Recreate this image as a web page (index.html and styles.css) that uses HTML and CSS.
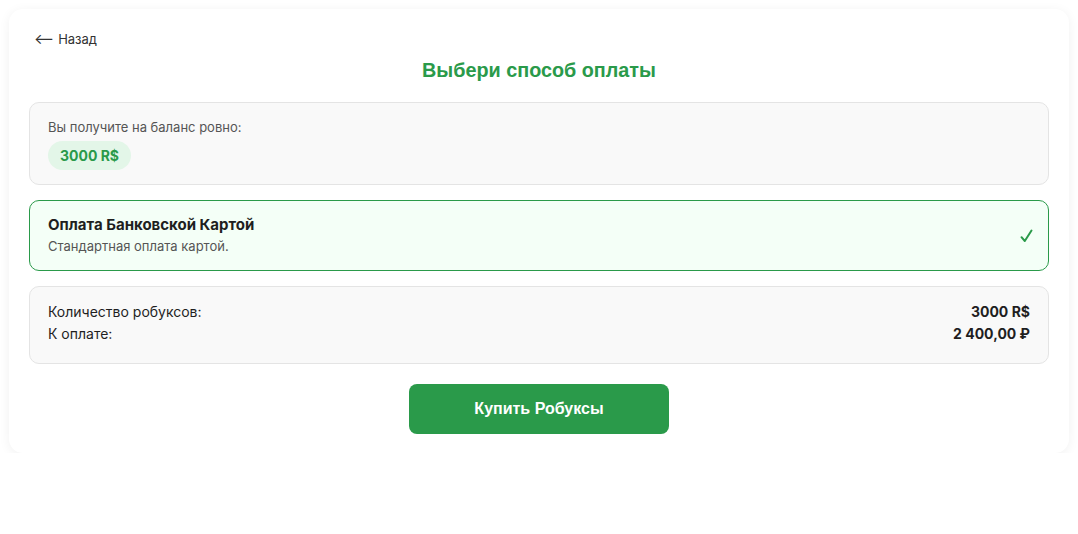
FILE: index.html
```html
<!DOCTYPE html>
<html lang="ru">
<head>
<meta charset="utf-8">
<title>Выбери способ оплаты</title>
<link rel="stylesheet" href="styles.css">
</head>
<body>
<div class="card">
  <a class="back" href="#"><span class="arrow">⟵</span> Назад</a>
  <h1 class="title">Выбери способ оплаты</h1>
  <div class="box info">
    <div class="info-label">Вы получите на баланс ровно:</div>
    <span class="pill">3000 R$</span>
  </div>
  <div class="box method">
    <div class="method-text">
      <div class="method-name">Оплата Банковской Картой</div>
      <div class="method-desc">Стандартная оплата картой.</div>
    </div>
    <svg class="check" width="13" height="14" viewBox="0 0 13 14" aria-hidden="true">
      <path d="M1.5 8.2 L4.8 12 L11.5 1.5" fill="none" stroke="#2a9a4a" stroke-width="2" stroke-linecap="round" stroke-linejoin="round"/>
    </svg>
  </div>
  <div class="box summary">
    <div class="row"><span>Количество робуксов:</span><b>3000 R$</b></div>
    <div class="row"><span>К оплате:</span><b>2 400,00 ₽</b></div>
  </div>
  <div class="actions">
    <button class="buy">Купить Робуксы</button>
  </div>
</div>
</body>
</html>
```
FILE: styles.css
```css
html, body { margin: 0; padding: 0; background: #fff; }
body {
  font-family: Inter, "Noto Sans", sans-serif;
  color: #1f1f1f;
  padding: 9px 9px 0 9px;
}
.card {
  background: #fff;
  border-radius: 14px;
  box-shadow: 0 2px 12px rgba(0,0,0,0.06);
  padding: 19px 20px 19px 20px;
}
.back {
  display: inline-flex;
  align-items: center;
  gap: 4px;
  font-size: 13px;
  color: #333;
  text-decoration: none;
  margin-left: 5px;
  line-height: 18px;
}
.arrow { font-size: 15px; line-height: 18px; }
.title {
  margin: 10px 0 20px 0;
  text-align: center;
  font-family: "Liberation Sans", Arial, sans-serif;
  font-weight: 700;
  font-size: 19.8px;
  line-height: 24px;
  color: #2a9a4a;
}
.box {
  border: 1px solid #e4e4e4;
  border-radius: 10px;
  background: #f9f9f9;
  padding: 0 18px;
}
.info { padding-top: 15px; padding-bottom: 14px; }
.info-label { font-size: 13px; color: #555; line-height: 18px; }
.pill {
  display: inline-block;
  margin-top: 5px;
  background: #e3f6e8;
  color: #2a9a4a;
  font-weight: 700;
  font-size: 14px;
  line-height: 29px;
  padding: 0 12px;
  border-radius: 15px;
}
.method {
  margin-top: 15px;
  border-color: #2a9a4a;
  background: #f4fff7;
  display: flex;
  align-items: center;
  justify-content: space-between;
  padding-top: 14px;
  padding-bottom: 15px;
}
.method-name { font-weight: 700; font-size: 15px; line-height: 20px; color: #1f1f1f; }
.method-desc { font-size: 13px; color: #555; line-height: 18px; margin-top: 2px; }
.check { margin-right: -3px; margin-top: 2px; }
.summary {
  margin-top: 15px;
  padding-top: 14px;
  padding-bottom: 18px;
}
.row {
  display: flex;
  justify-content: space-between;
  font-size: 14px;
  line-height: 22px;
  color: #1f1f1f;
}
.row b { font-weight: 700; }
.actions { display: flex; justify-content: center; margin-top: 20px; }
.buy {
  width: 260px;
  height: 50px;
  border: 0;
  border-radius: 8px;
  background: #2a9a4a;
  color: #fff;
  font-family: "Liberation Sans", Arial, sans-serif;
  font-weight: 700;
  font-size: 16px;
  cursor: pointer;
}
```
